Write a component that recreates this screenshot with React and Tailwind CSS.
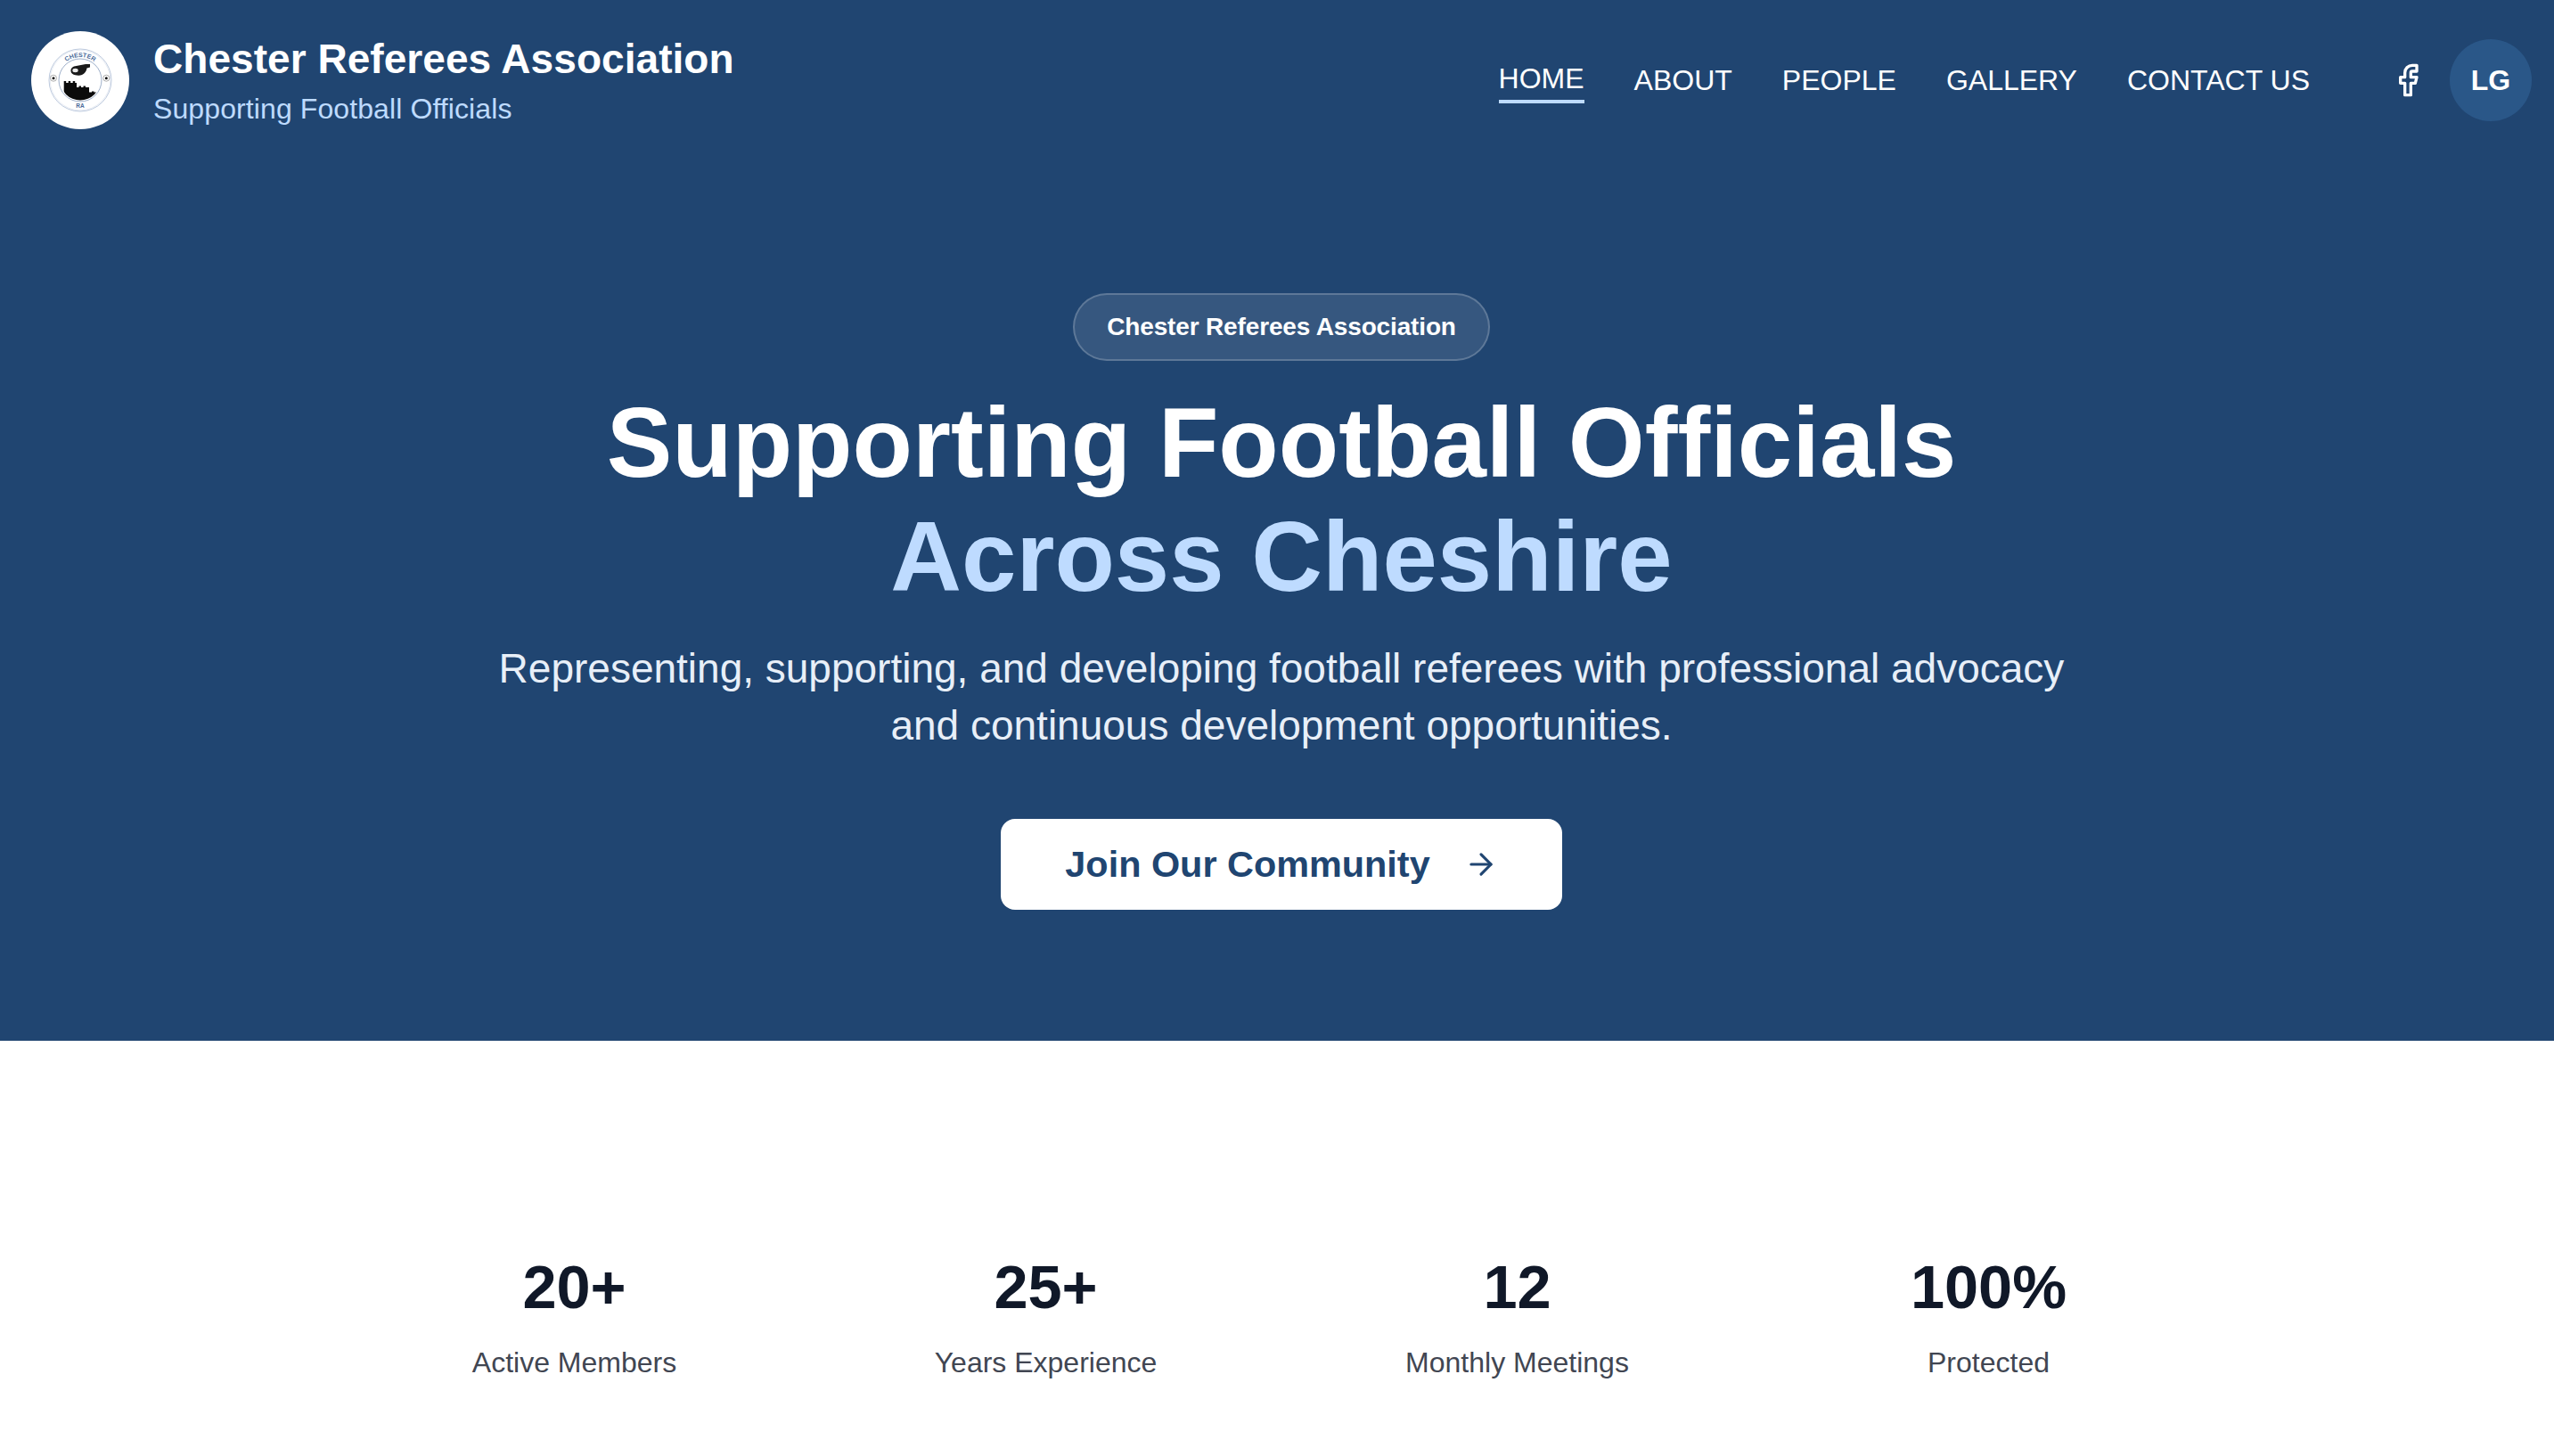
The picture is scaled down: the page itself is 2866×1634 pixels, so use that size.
import React from 'react';
import { ArrowRight, Facebook } from 'lucide-react';

const navLinks = ['ABOUT', 'PEOPLE', 'GALLERY', 'CONTACT US'];

const stats = [
  { value: '20+', label: 'Active Members' },
  { value: '25+', label: 'Years Experience' },
  { value: '12', label: 'Monthly Meetings' },
  { value: '100%', label: 'Protected' },
];

const Logo = () => (
  <svg viewBox="0 0 110 110" className="w-[110px] h-[110px]">
    <circle cx="55" cy="55" r="55" fill="#ffffff" />
    <circle cx="55" cy="55" r="35" fill="none" stroke="#9fb2cf" strokeWidth="0.7" />
    <circle cx="55" cy="55" r="33.800" fill="none" stroke="#d0d9e7" strokeWidth="0.5" />
    <circle cx="55" cy="55" r="24" fill="none" stroke="#5d79a5" strokeWidth="0.6" />
    <defs>
      <path id="logo-top" d="M 29 55 A 26 26 0 0 1 81 55" />
      <clipPath id="logo-inner">
        <circle cx="55" cy="55" r="22.500" />
      </clipPath>
    </defs>
    <text fontFamily="Liberation Sans, sans-serif" fontSize="7" fontWeight="700" fill="#4a6a9a" textAnchor="middle">
      <textPath href="#logo-top" startOffset="50%">CHESTER</textPath>
    </text>
    <text x="55" y="85.500" fontFamily="Liberation Sans, sans-serif" fontSize="6.500" fontWeight="700" fill="#4a6a9a" textAnchor="middle">RA</text>
    <g clipPath="url(#logo-inner)">
      <path d="M36.700 80V56h2.500v2h2.500v-2h2.500v2h2.500v-2h2.500v2H51v5h2.500v-1.500h2.500v1.500h2.500v-1.500H61v1.500h4v5.500h3v-1h2.500v1H74V80z" fill="#0b0b0b" />
    </g>
    <path d="M44.500 45c-.5-2.500 1-4.500 3.500-5.500l13-2.500h5v3.500l-3.500 1c-.5 3.500-2.500 6-5.500 7.500-2.500 1-5 .8-7.500.3s-5-2-5-4.300z" fill="#1a1a1a" />
    <ellipse cx="49.500" cy="44" rx="3.200" ry="2.200" fill="#e8e8e8" />
    <circle cx="25" cy="52.700" r="3.500" fill="#ffffff" stroke="#777777" strokeWidth="0.6" />
    <circle cx="25" cy="52.700" r="1.500" fill="#111111" />
    <circle cx="84.300" cy="52.700" r="3.500" fill="#ffffff" stroke="#777777" strokeWidth="0.6" />
    <circle cx="84.300" cy="52.700" r="1.500" fill="#111111" />
  </svg>
);

const Header = () => (
  <header className="h-[180px] px-[35px] flex items-center justify-between">
    <div className="flex items-center gap-[27px]">
      <Logo />
      <div>
        <div className="text-[46px] leading-[64px] font-bold text-white tracking-[0.05px]">Chester Referees Association</div>
        <div className="text-[32px] leading-[48px] text-blue-200 tracking-[0.1px]">Supporting Football Officials</div>
      </div>
    </div>
    <div className="flex items-center">
      <nav className="flex items-center gap-[56px] text-[32px] leading-[48px] text-white">
        <a className="border-b-4 border-blue-200">HOME</a>
        {navLinks.map((link) => (
          <a key={link}>{link}</a>
        ))}
      </nav>
      <Facebook size={40} className="text-white ml-[90px]" />
      <div className="ml-[27px] w-[92px] h-[92px] rounded-full bg-[#2a5788] flex items-center justify-center text-white font-bold text-[32px]">LG</div>
    </div>
  </header>
);

const Hero = () => (
  <section className="h-[988px] flex flex-col items-center pt-[149px]">
    <div className="px-[36px] py-[16px] border-2 border-white/20 bg-white/10 rounded-full text-white text-[28px] leading-[40px] font-bold tracking-[-0.15px]">
      Chester Referees Association
    </div>
    <h1 className="mt-[28px] text-[110.400px] leading-[128px] font-bold text-white text-center">
      Supporting Football Officials
      <span className="block text-blue-200">Across Cheshire</span>
    </h1>
    <p className="mt-[29px] text-[46px] leading-[64px] text-[#e8eff8] text-center">
      Representing, supporting, and developing football referees with professional advocacy
      <br />
      and continuous development opportunities.
    </p>
    <button className="mt-[73px] w-[630px] h-[102px] bg-white rounded-[16px] flex items-center justify-center gap-[38px] text-[#204571] text-[41.400px] font-bold">
      Join Our Community
      <ArrowRight size={38} strokeWidth={2} />
    </button>
  </section>
);

const Stats = () => (
  <section className="bg-white pt-[237px]">
    <div className="w-[2116px] mx-auto grid grid-cols-4">
      {stats.map((stat) => (
        <div key={stat.label} className="text-center">
          <div className="text-[68.500px] leading-[80px] font-bold text-gray-900">{stat.value}</div>
          <div className="mt-[20px] text-[32px] leading-[48px] text-[#414652]">{stat.label}</div>
        </div>
      ))}
    </div>
  </section>
);

export default function App() {
  return (
    <div className="w-[2866px] h-[1634px] overflow-hidden bg-white font-['Liberation_Sans',sans-serif]">
      <div className="w-[2876px]">
        <div className="bg-[#204571]">
          <Header />
          <Hero />
        </div>
        <Stats />
      </div>
    </div>
  );
}
